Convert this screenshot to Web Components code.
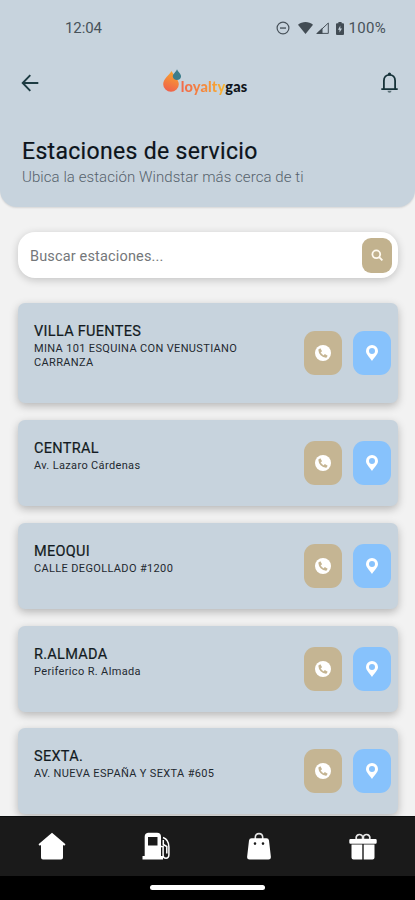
<!DOCTYPE html>
<html lang="es">
<head>
<meta charset="utf-8">
<meta name="viewport" content="width=device-width, initial-scale=1">
<title>Estaciones de servicio</title>
<style>
  body {
    margin: 0;
    font-family: Roboto, "Liberation Sans", sans-serif;
    background: #f2f2f2;
  }
</style>
</head>
<body>
<gas-app>
  <app-header slot="header">
    <span slot="title">Estaciones de servicio</span>
    <span slot="subtitle">Ubica la estación Windstar más cerca de ti</span>
  </app-header>
  <search-box placeholder="Buscar estaciones..."></search-box>
  <station-card tall>
    <span slot="name">VILLA FUENTES</span>
    <span slot="address">MINA 101 ESQUINA CON VENUSTIANO<br>CARRANZA</span>
  </station-card>
  <station-card>
    <span slot="name">CENTRAL</span>
    <span slot="address">Av. Lazaro Cárdenas</span>
  </station-card>
  <station-card>
    <span slot="name">MEOQUI</span>
    <span slot="address">CALLE DEGOLLADO #1200</span>
  </station-card>
  <station-card>
    <span slot="name">R.ALMADA</span>
    <span slot="address">Periferico R. Almada</span>
  </station-card>
  <station-card>
    <span slot="name">SEXTA.</span>
    <span slot="address">AV. NUEVA ESPAÑA Y SEXTA #605</span>
  </station-card>
  <bottom-nav slot="footer"></bottom-nav>
</gas-app>

<script>
class GasApp extends HTMLElement {
  constructor() {
    super();
    this.attachShadow({ mode: 'open' });
    this.shadowRoot.innerHTML = `
      <style>
        :host {
          display: flex;
          flex-direction: column;
          height: 900px;
          overflow: hidden;
        }
        main {
          flex: 1;
          min-height: 0;
          overflow: hidden;
          display: flex;
          flex-direction: column;
          gap: 16.8px;
          padding: 25px 17px 0 18px;
        }
      </style>
      <slot name="header"></slot>
      <main><slot></slot></main>
      <slot name="footer"></slot>
    `;
  }
}

class StatusBar extends HTMLElement {
  constructor() {
    super();
    this.attachShadow({ mode: 'open' });
    this.shadowRoot.innerHTML = `
      <style>
        :host {
          display: flex;
          align-items: center;
          justify-content: space-between;
          height: 56px;
          padding: 0 29px 0 65px;
          color: #48525a;
          font-size: 15px;
        }
        .time { letter-spacing: -0.1px; }
        .status { display: flex; align-items: center; }
        .percent { letter-spacing: 0.3px; }
        svg { display: block; fill: #424c54; }
      </style>
      <span class="time">12:04</span>
      <div class="status">
        <svg width="14" height="14" viewBox="0 0 14 14"><circle cx="7" cy="7" r="5.9" fill="none" stroke="#48525a" stroke-width="1.2"/><path d="M4 6.4h6v1.3H4z"/></svg>
        <svg width="15" height="12" viewBox="0 0 15 12" style="margin-left:8px"><path d="M0 2.7C4.2-.9 10.8-.9 15 2.7L7.5 12z"/></svg>
        <svg width="13" height="12" viewBox="0 0 13 12" style="margin-left:3px"><path d="M12.3 1v10.4H1.2z" fill="none" stroke="#48525a"/><path d="M0 12 6.5 5.7V12z"/></svg>
        <svg width="8" height="13" viewBox="0 0 8 13" style="margin-left:7px"><path fill-rule="evenodd" d="M2.4 0h3.2v1.2H7a1 1 0 0 1 1 1V12a1 1 0 0 1-1 1H1a1 1 0 0 1-1-1V2.2a1 1 0 0 1 1-1h1.4zM4.3 3.6 2 7.8h1.5v2.8L6 6.600H4.300z"/></svg>
        <span class="percent" style="margin-left:5px">100%</span>
      </div>
    `;
  }
}

class BrandLogo extends HTMLElement {
  constructor() {
    super();
    this.attachShadow({ mode: 'open' });
    this.shadowRoot.innerHTML = `
      <style>
        :host {
          display: flex;
          align-items: flex-start;
          height: 28px;
          font: 900 14.5px/16px Lato, sans-serif;
        }
        svg { display: block; }
        .word {
          display: flex;
          margin-top: 10px;
          letter-spacing: 0.15px;
        }
        .loyalty {
          height: 20px;
          color: transparent;
          background: linear-gradient(90deg, #f26a4b, #f58a3c 55%, #f9b52c);
          -webkit-background-clip: text;
          background-clip: text;
        }
        .gas { color: #10151a; }
      </style>
      <svg width="18" height="24" viewBox="0 0 18 24">
        <defs>
          <linearGradient id="flame" x1=".6" y1="0" x2=".3" y2="1">
            <stop offset="0" stop-color="#f9a52d"/><stop offset="1" stop-color="#ef5f4c"/>
          </linearGradient>
        </defs>
        <path fill="url(#flame)" d="M8.5 2C7 5.5.2 9.5.2 15.3a7.8 7.400 0 0 0 15.600 0C15.800 10.500 11 7 8.500 2z"/>
        <path fill="#3d7d8b" d="M14 .3c1 2.700 4.100 4.400 4.100 7.200a4.200 4.100 0 0 1-8.300 0C9.800 4.700 13 3.300 14 .3z"/>
      </svg>
      <div class="word"><span class="loyalty">loyalty</span><span class="gas">gas</span></div>
    `;
  }
}

class AppHeader extends HTMLElement {
  constructor() {
    super();
    this.attachShadow({ mode: 'open' });
    this.shadowRoot.innerHTML = `
      <style>
        :host {
          display: block;
          flex: none;
          height: 207px;
          background: #c7d3dd;
          border-radius: 0 0 17px 17px;
          box-shadow: 0 1px 2px rgba(0,0,0,0.12);
        }
        .toolbar {
          display: grid;
          grid-template-columns: 1fr auto 1fr;
          align-items: center;
          height: 54px;
          padding: 0 17px 0 21px;
        }
        .toolbar svg { display: block; }
        .bell { justify-self: end; }
        brand-logo { margin-right: 9px; }
        h1 {
          margin: 26px 0 0 22px;
          font-size: 23px;
          line-height: 31px;
          font-weight: 400;
          letter-spacing: 0.32px;
          color: #0c141b;
          -webkit-text-stroke: 0.2px #0c141b;
        }
        p {
          margin: 0 0 0 22px;
          font-size: 15px;
          line-height: 20px;
          font-weight: 300;
          letter-spacing: 0.07px;
          color: #56626c;
        }
      </style>
      <status-bar></status-bar>
      <div class="toolbar">
        <svg width="18" height="18" viewBox="0 0 18 18" fill="none" stroke="#1d3b42" stroke-width="1.9"><path d="M17.3 9H2M9.3 1.2 1.700 9l7.600 7.800"/></svg>
        <brand-logo></brand-logo>
        <svg class="bell" width="17" height="22" viewBox="0 0 17 22"><path fill="none" stroke="#163239" stroke-width="1.8" d="M.3 17.200h16.400M2.900 17V8.800c0-3.600 2.300-6 5.600-6s5.600 2.400 5.600 6V17"/><circle cx="8.500" cy="2" r="1.600" fill="#163239"/><path fill="#5b7178" d="M6.500 18.800h4a2 2 0 0 1-4 0z"/></svg>
      </div>
      <h1><slot name="title"></slot></h1>
      <p><slot name="subtitle"></slot></p>
    `;
  }
}

class SearchBox extends HTMLElement {
  constructor() {
    super();
    this.attachShadow({ mode: 'open' });
    this.shadowRoot.innerHTML = `
      <style>
        :host {
          display: flex;
          flex: none;
          align-items: center;
          justify-content: space-between;
          box-sizing: border-box;
          height: 46px;
          margin-bottom: 8.5px;
          padding: 0 6px 0 12px;
          border-radius: 17px;
          background: #fff;
          box-shadow: 0 2px 9px rgba(0,0,0,0.2);
        }
        .hint {
          padding-top: 2px;
          font-size: 14.5px;
          letter-spacing: 0.16px;
          color: #74777a;
        }
        button {
          display: flex;
          align-items: center;
          justify-content: center;
          width: 30px;
          height: 35px;
          padding: 0;
          border: none;
          border-radius: 9px;
          background: #c2b28e;
        }
      </style>
      <span class="hint"></span>
      <button type="button" aria-label="Buscar">
        <svg width="12" height="12" viewBox="0 0 12 12" fill="none" stroke="#fffaf0" stroke-width="1.8"><circle cx="5.300" cy="5.300" r="3.900"/><path d="m8.200 8.200 3.200 3.200"/></svg>
      </button>
    `;
    this.shadowRoot.querySelector('.hint').textContent = this.getAttribute('placeholder');
  }
}

class StationCard extends HTMLElement {
  constructor() {
    super();
    this.attachShadow({ mode: 'open' });
    this.shadowRoot.innerHTML = `
      <style>
        :host {
          display: flex;
          flex: none;
          align-items: center;
          justify-content: space-between;
          box-sizing: border-box;
          height: 86px;
          padding: 0 7px 0 16px;
          border-radius: 7px;
          background: #c7d3dd;
          box-shadow: 0 3px 8px rgba(0,0,0,0.25);
        }
        :host([tall]) { height: 100px; }
        .info {
          align-self: flex-start;
          padding-top: 19px;
        }
        .name {
          font-size: 14.5px;
          line-height: 19px;
          letter-spacing: 0.3px;
          color: #131b22;
          -webkit-text-stroke: 0.2px #131b22;
        }
        .address {
          font-size: 11px;
          line-height: 13.5px;
          margin-top: 1px;
          letter-spacing: 0.35px;
          color: #1f2930;
        }
        .actions { display: flex; gap: 11px; }
        button {
          display: flex;
          align-items: center;
          justify-content: center;
          width: 38px;
          height: 44px;
          padding: 0;
          border: none;
          border-radius: 11px;
        }
        .call { background: #c5b593; }
        .map { background: #87c2fc; }
      </style>
      <div class="info">
        <div class="name"><slot name="name"></slot></div>
        <div class="address"><slot name="address"></slot></div>
      </div>
      <div class="actions">
        <button class="call" type="button" aria-label="Llamar">
          <svg width="16" height="16" viewBox="0 0 16 16"><circle cx="8" cy="8" r="8" fill="#fff"/><path fill="none" stroke="#c5b593" stroke-width="1.7" d="M4.200 4.800c.1 3.800 3 6.900 7 7.100"/><path fill="#c5b593" d="m3.400 4.600 2-1.300 1.700 2.900-1.700 1.400zM11.400 12.700l1.300-2-2.900-1.700-1.400 1.700z"/></svg>
        </button>
        <button class="map" type="button" aria-label="Mapa">
          <svg width="12" height="16" viewBox="0 0 12 16"><path fill="#fff" fill-rule="evenodd" d="M6 0a6 6 0 0 1 6 6c0 3.300-3.500 6.200-6 10C3.500 12.200 0 9.300 0 6a6 6 0 0 1 6-6zm0 2.900a3 3 0 1 0 0 6 3 3 0 0 0 0-6z"/></svg>
        </button>
      </div>
    `;
  }
}

class BottomNav extends HTMLElement {
  constructor() {
    super();
    this.attachShadow({ mode: 'open' });
    this.shadowRoot.innerHTML = `
      <style>
        :host {
          display: block;
          flex: none;
          height: 84px;
          background: #000;
        }
        nav {
          display: grid;
          grid-template-columns: repeat(4, 1fr);
          place-items: center;
          height: 59.5px;
          background: #1a1a1a;
          border-top: 1px solid #0b0e0e;
          box-sizing: border-box;
        }
        svg { display: block; fill: #fff; }
        .handle {
          width: 115px;
          height: 5px;
          margin: 9.5px auto 0;
          border-radius: 3px;
          background: #fff;
        }
      </style>
      <nav>
        <svg width="28" height="28" viewBox="0 0 28 28"><path d="M14 .8 27.500 12.200l-1.200 1.600-1.300-.8v12.500a2 2 0 0 1-2 2H5a2 2 0 0 1-2-2V13l-1.300.8L.500 12.200z"/></svg>
        <svg width="28" height="28" viewBox="0 0 28 28"><path fill-rule="evenodd" d="M6 .8h9a4 4 0 0 1 4 4V24h2v3.500H.500V24H2.700V4.800a4 4 0 0 1 3.300-4zM6 5v8.500h9.500V5z"/><path fill="none" stroke="#fff" stroke-width="1.500" d="M21 5.500c4 1.500 5.900 4.500 5.900 9.500v7.500c0 2.300-1 3.700-2.900 3.700s-2.900-1.200-2.900-3V14.500H19M21.300 8v4.500l3.500 2v7"/></svg>
        <svg width="28" height="28" viewBox="0 0 28 28"><path fill="none" stroke="#e6e6e6" stroke-width="1.600" d="M10.300 7V5.500c0-2.500 1.300-3.900 3.700-3.900s3.700 1.400 3.700 3.900V7"/><path fill-rule="evenodd" d="M6.500 6.300h15A2.600 2.600 0 0 1 24 8.500l1.900 16.400a2.400 2.400 0 0 1-2.400 2.600h-19a2.400 2.400 0 0 1-2.400-2.600L4 8.500a2.600 2.600 0 0 1 2.500-2.200zM10 10.300a1.300 1.300 0 1 0 0 2.600 1.300 1.300 0 0 0 0-2.600zm8 0a1.300 1.300 0 1 0 0 2.600 1.300 1.300 0 0 0 0-2.600z"/></svg>
        <svg width="28" height="28" viewBox="0 0 28 28"><path fill="none" stroke="#e6e6e6" stroke-width="1.700" d="M13.600 7.500H7.500a3.400 3.400 0 1 1 6.100-3zM14.400 7.500h6.100a3.400 3.400 0 1 0-6.100-3z"/><path d="M1.500 7h25a1.200 1.200 0 0 1 1.200 1.200v2.300a1.200 1.200 0 0 1-1.200 1.200h-25A1.200 1.200 0 0 1 .3 10.500V8.200A1.200 1.200 0 0 1 1.500 7zM2.500 12.600h10.800v14.900H4.500a2 2 0 0 1-2-2zM14.700 12.600h10.800v12.900a2 2 0 0 1-2 2h-8.800z"/></svg>
      </nav>
      <div class="handle"></div>
    `;
  }
}

customElements.define('status-bar', StatusBar);
customElements.define('brand-logo', BrandLogo);
customElements.define('app-header', AppHeader);
customElements.define('search-box', SearchBox);
customElements.define('station-card', StationCard);
customElements.define('bottom-nav', BottomNav);
customElements.define('gas-app', GasApp);
</script>
</body>
</html>
